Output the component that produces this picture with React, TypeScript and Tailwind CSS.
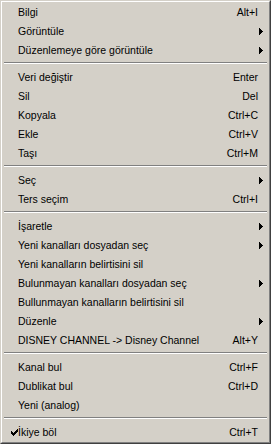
type Item =
  | { kind: "item"; label: string; shortcut?: string; sub?: boolean; checked?: boolean }
  | { kind: "sep" };

const items: Item[] = [
  { kind: "item", label: "Bilgi", shortcut: "Alt+I" },
  { kind: "item", label: "Görüntüle", sub: true },
  { kind: "item", label: "Düzenlemeye göre görüntüle", sub: true },
  { kind: "sep" },
  { kind: "item", label: "Veri değiştir", shortcut: "Enter" },
  { kind: "item", label: "Sil", shortcut: "Del" },
  { kind: "item", label: "Kopyala", shortcut: "Ctrl+C" },
  { kind: "item", label: "Ekle", shortcut: "Ctrl+V" },
  { kind: "item", label: "Taşı", shortcut: "Ctrl+M" },
  { kind: "sep" },
  { kind: "item", label: "Seç", sub: true },
  { kind: "item", label: "Ters seçim", shortcut: "Ctrl+I" },
  { kind: "sep" },
  { kind: "item", label: "İşaretle", sub: true },
  { kind: "item", label: "Yeni kanalları dosyadan seç", sub: true },
  { kind: "item", label: "Yeni kanalların belirtisini sil" },
  { kind: "item", label: "Bulunmayan kanalları dosyadan seç", sub: true },
  { kind: "item", label: "Bullunmayan kanalların belirtisini sil" },
  { kind: "item", label: "Düzenle", sub: true },
  { kind: "item", label: "DISNEY CHANNEL -> Disney Channel", shortcut: "Alt+Y" },
  { kind: "sep" },
  { kind: "item", label: "Kanal bul", shortcut: "Ctrl+F" },
  { kind: "item", label: "Dublikat bul", shortcut: "Ctrl+D" },
  { kind: "item", label: "Yeni (analog)" },
  { kind: "sep" },
  { kind: "item", label: "İkiye böl", shortcut: "Ctrl+T", checked: true },
];

const Arrow = () => (
  <svg width="4" height="7" viewBox="0 0 4 7" shapeRendering="crispEdges" className="ml-auto mr-[5px]">
    <rect x="0" y="0" width="1" height="7" fill="#000" />
    <rect x="1" y="1" width="1" height="5" fill="#000" />
    <rect x="2" y="2" width="1" height="3" fill="#000" />
    <rect x="3" y="3" width="1" height="1" fill="#000" />
  </svg>
);

// classic 7x7 check glyph
const Check = () => (
  <svg width="7" height="7" viewBox="0 0 7 7" shapeRendering="crispEdges" className="absolute left-[8px] top-[6px]">
    <rect x="6" y="0" width="1" height="1" fill="#000" />
    <rect x="5" y="1" width="2" height="1" fill="#000" />
    <rect x="0" y="2" width="1" height="1" fill="#000" />
    <rect x="4" y="2" width="3" height="1" fill="#000" />
    <rect x="0" y="3" width="2" height="1" fill="#000" />
    <rect x="3" y="3" width="3" height="1" fill="#000" />
    <rect x="0" y="4" width="5" height="1" fill="#000" />
    <rect x="1" y="5" width="3" height="1" fill="#000" />
    <rect x="2" y="6" width="1" height="1" fill="#000" />
  </svg>
);

export default function App() {
  return (
    <div
      className="w-[271px] h-[444px] bg-[#d4d0c8] text-black text-[10.5px] border border-t-[#d4d0c8] border-l-[#d4d0c8] border-r-[#404040] border-b-[#404040]"
      style={{ fontFamily: '"Liberation Sans", Arial, sans-serif' }}
    >
      <div className="h-full border border-t-white border-l-white border-r-[#808080] border-b-[#808080] p-[1px]">
        {items.map((it, i) =>
          it.kind === "sep" ? (
            <div key={i} className="h-[8px] pt-[2px] px-[1px]">
              <div className="h-[1px] bg-[#808080]" />
              <div className="h-[1px] bg-white" />
            </div>
          ) : (
            <div key={i} className="relative flex items-center h-[19px] pl-[15px] whitespace-nowrap">
              {it.checked && <Check />}
              <span>{it.label}</span>
              {it.shortcut && <span className="ml-auto pr-[10px]">{it.shortcut}</span>}
              {it.sub && <Arrow />}
            </div>
          )
        )}
      </div>
    </div>
  );
}
